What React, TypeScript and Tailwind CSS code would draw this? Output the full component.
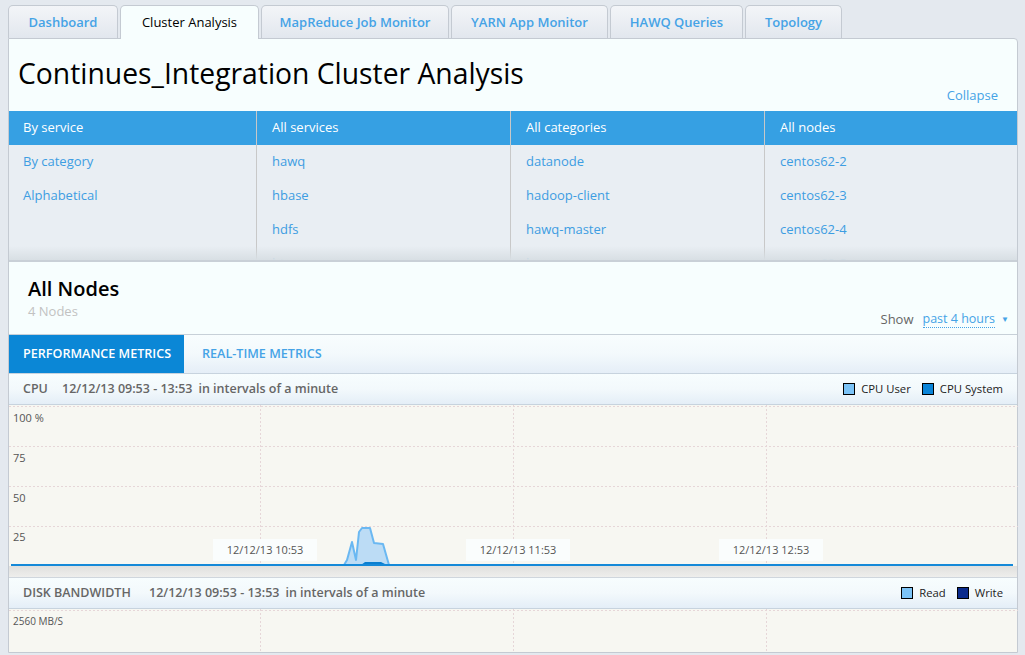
import React from "react";

const font = { fontFamily: '"Open Sans", "Noto Sans", sans-serif' };

const tabs = [
  { name: "Dashboard", w: "w-[110px]" },
  { name: "Cluster Analysis", w: "w-[139px]", active: true },
  { name: "MapReduce Job Monitor", w: "w-[188px]" },
  { name: "YARN App Monitor", w: "w-[157px]" },
  { name: "HAWQ Queries", w: "w-[133px]" },
  { name: "Topology", w: "w-[97px]" },
];

const columns = [
  { head: "By service", items: ["By category", "Alphabetical"] },
  { head: "All services", items: ["hawq", "hbase", "hdfs", "hive"] },
  { head: "All categories", items: ["datanode", "hadoop-client", "hawq-master", "hawq-segment"] },
  { head: "All nodes", items: ["centos62-2", "centos62-3", "centos62-4", "centos62-5"] },
];

function Tabs() {
  return (
    <div className="flex items-end gap-[2px] pl-2 pt-[5px] h-[38px]">
      {tabs.map((t) =>
        t.active ? (
          <div
            key={t.name}
            className={`${t.w} h-[34px] -mb-px z-10 flex items-center justify-center pt-px rounded-t-[5px] border border-b-0 border-[#c4cad2] bg-[#f7fefe] text-[13px] text-black`}
          >
            {t.name}
          </div>
        ) : (
          <div
            key={t.name}
            className={`${t.w} h-[33px] flex items-center justify-center pt-px rounded-t-[5px] border border-b-0 border-[#c4cad2] bg-gradient-to-b from-[#f3f5f8] to-[#e2e7ee] text-[13px] font-semibold text-[#45a3e6]`}
          >
            {t.name}
          </div>
        )
      )}
    </div>
  );
}

function NavColumns() {
  return (
    <div className="relative h-[151px] overflow-hidden border-b-2 border-[#c9d0d7]">
      <div className="grid grid-cols-[247px_254px_254px_1fr] h-full">
        {columns.map((c, i) => (
          <div key={c.head} className={`flex flex-col ${i > 0 ? "border-l border-[#c8c8c8]" : ""}`}>
            <div
              className={`h-[34px] shrink-0 bg-[#36a0e3] flex items-center ${i > 0 ? "pl-[15px]" : "pl-[14px]"} text-[13px] text-white`}
            >
              {c.head}
            </div>
            <div className="flex-1 bg-[#e9eef3]">
              {c.items.map((it) => (
                <div
                  key={it}
                  className={`h-[34px] flex items-center ${i > 0 ? "pl-[15px]" : "pl-[14px]"} text-[13px] text-[#3d9de2]`}
                >
                  {it}
                </div>
              ))}
            </div>
          </div>
        ))}
      </div>
      <div className="absolute left-0 right-0 bottom-0 h-[14px] bg-gradient-to-b from-[#e9eef3]/0 to-[#d8dfe4]" />
    </div>
  );
}

function Legend({ items }: { items: { label: string; color: string }[] }) {
  return (
    <div className="flex items-center gap-[11px] text-[11.3px] font-normal text-[#222]">
      {items.map((it) => (
        <div key={it.label} className="flex items-center gap-[6px]">
          <span className={`w-[12px] h-[12px] border border-black ${it.color}`} />
          <span>{it.label}</span>
        </div>
      ))}
    </div>
  );
}

function SectionHeader({
  title,
  titleWidth,
  legend,
}: {
  title: string;
  titleWidth: string;
  legend: { label: string; color: string }[];
}) {
  return (
    <div className="h-[31px] flex items-center justify-between pl-[14px] pr-[14px] border-b border-[#c7d3de] bg-gradient-to-b from-[#f7fdfe] via-[#f3f9fc] to-[#e4eef7] text-[12.5px] font-semibold text-[#666]">
      <div className="flex items-center">
        <span className={titleWidth}>{title}</span>
        <span className="mr-[6px]">12/12/13 09:53 - 13:53</span>
        <span>in intervals of a minute</span>
      </div>
      <Legend items={legend} />
    </div>
  );
}

function CpuChart() {
  const yLabels = [
    { t: "100 %", y: 5 },
    { t: "75", y: 45 },
    { t: "50", y: 85 },
    { t: "25", y: 124 },
  ];
  const xLabels = [
    { t: "12/12/13 10:53", x: 204 },
    { t: "12/12/13 11:53", x: 457 },
    { t: "12/12/13 12:53", x: 710 },
  ];
  return (
    <div className="relative h-[161px] bg-[#f7f7f2]">
      <svg className="absolute inset-0" width="1009" height="161">
        {[1, 41, 81, 121].map((y) => (
          <line key={y} x1="0" x2="1009" y1={y + 0.5} y2={y + 0.5} stroke="#e6d6d8" strokeDasharray="2 2" />
        ))}
        {[251, 504, 757].map((x) => (
          <line key={x} x1={x + 0.5} x2={x + 0.5} y1="0" y2="161" stroke="#e6d6d8" strokeDasharray="2 2" />
        ))}
        <path
          d="M335 160 L338 155 L343 137 L347 155 L350 127 L353 123 L361 123 L365 138 L374 139 L380 160 Z"
          fill="#bcdcf5"
          stroke="#6ab8f2"
          strokeWidth="2"
          strokeLinejoin="round"
        />
        <path d="M352 160 L356 157 L372 157 L378 160 Z" fill="#0b7fd0" />
        <line x1="2" x2="1004" y1="160" y2="160" stroke="#1589d8" strokeWidth="2" />
      </svg>
      {yLabels.map((l) => (
        <div key={l.t} className="absolute left-[4px] text-[11px] text-[#555]" style={{ top: l.y }}>
          {l.t}
        </div>
      ))}
      {xLabels.map((l) => (
        <div
          key={l.t}
          className="absolute w-[104px] h-[22px] flex items-center justify-center bg-[#fafdfd] text-[11px] text-[#555]"
          style={{ left: l.x, top: 134 }}
        >
          {l.t}
        </div>
      ))}
    </div>
  );
}

function DiskChart() {
  return (
    <div className="relative h-[43px] bg-[#f7f7f2]">
      <svg className="absolute inset-0" width="1009" height="43">
        <line x1="0" x2="1009" y1="1.5" y2="1.5" stroke="#e6d6d8" strokeDasharray="2 2" />
        {[251, 504, 757].map((x) => (
          <line key={x} x1={x + 0.5} x2={x + 0.5} y1="0" y2="43" stroke="#e6d6d8" strokeDasharray="2 2" />
        ))}
      </svg>
      <div className="absolute left-[4px] top-[5px] text-[10px] text-[#555]">2560 MB/S</div>
    </div>
  );
}

export default function App() {
  return (
    <div className="w-[1025px] h-[655px] overflow-hidden bg-[#e4e9ef]" style={font}>
      <Tabs />
      <div className="ml-2 w-[1010px] border border-[#c4cad2] rounded-tr-[4px] bg-[#f7fefe]">
        <div className="h-[72px] relative">
          <h1 className="pl-[9px] pt-[15px] text-[28.3px] leading-[38px] text-black">
            Continues_Integration Cluster Analysis
          </h1>
          <div className="absolute right-[19px] bottom-[6px] text-[13px] text-[#45a3e6]">Collapse</div>
        </div>
        <NavColumns />
        <div className="h-[73px] flex justify-between items-end pl-[19px] pr-[8px] pb-[5px] border-b border-[#c7d0d8]">
          <div className="self-start pt-[14px]">
            <div className="text-[20px] leading-[26px] font-semibold text-black">All Nodes</div>
            <div className="text-[13px] text-[#c2c2c2]">4 Nodes</div>
          </div>
          <div className="flex items-center text-[13px]">
            <span className="text-[#666] mr-[9px]">Show</span>
            <span className="text-[12.5px] text-[#45a3e6] border-b border-dotted border-[#45a3e6] leading-[16px]">
              past 4 hours
            </span>
            <span className="ml-[6px] text-[8px] text-[#45a3e6]">▼</span>
          </div>
        </div>
        <div className="h-[39px] flex items-stretch border-b border-[#c7d3de] bg-gradient-to-b from-[#f8fdfe] via-[#f3f9fc] to-[#e5eef7]">
          <div className="w-[175px] flex items-center px-[14px] whitespace-nowrap bg-[#0b87d6] text-[12.6px] font-semibold text-white">
            PERFORMANCE METRICS
          </div>
          <div className="flex items-center px-[18px] whitespace-nowrap text-[12.6px] font-semibold text-[#45a3e6]">
            REAL-TIME METRICS
          </div>
        </div>
        <SectionHeader
          title="CPU"
          titleWidth="w-[39px]"
          legend={[
            { label: "CPU User", color: "bg-[#7cc3f6]" },
            { label: "CPU System", color: "bg-[#0a84d8]" },
          ]}
        />
        <CpuChart />
        <div className="h-[12px] bg-gradient-to-b from-[#e0e0de] to-[#eeeeec] border-b border-[#cfd6dd]" />
        <SectionHeader
          title="DISK BANDWIDTH"
          titleWidth="w-[126px]"
          legend={[
            { label: "Read", color: "bg-[#7cc3f6]" },
            { label: "Write", color: "bg-[#0a2a8c]" },
          ]}
        />
        <DiskChart />
      </div>
    </div>
  );
}
